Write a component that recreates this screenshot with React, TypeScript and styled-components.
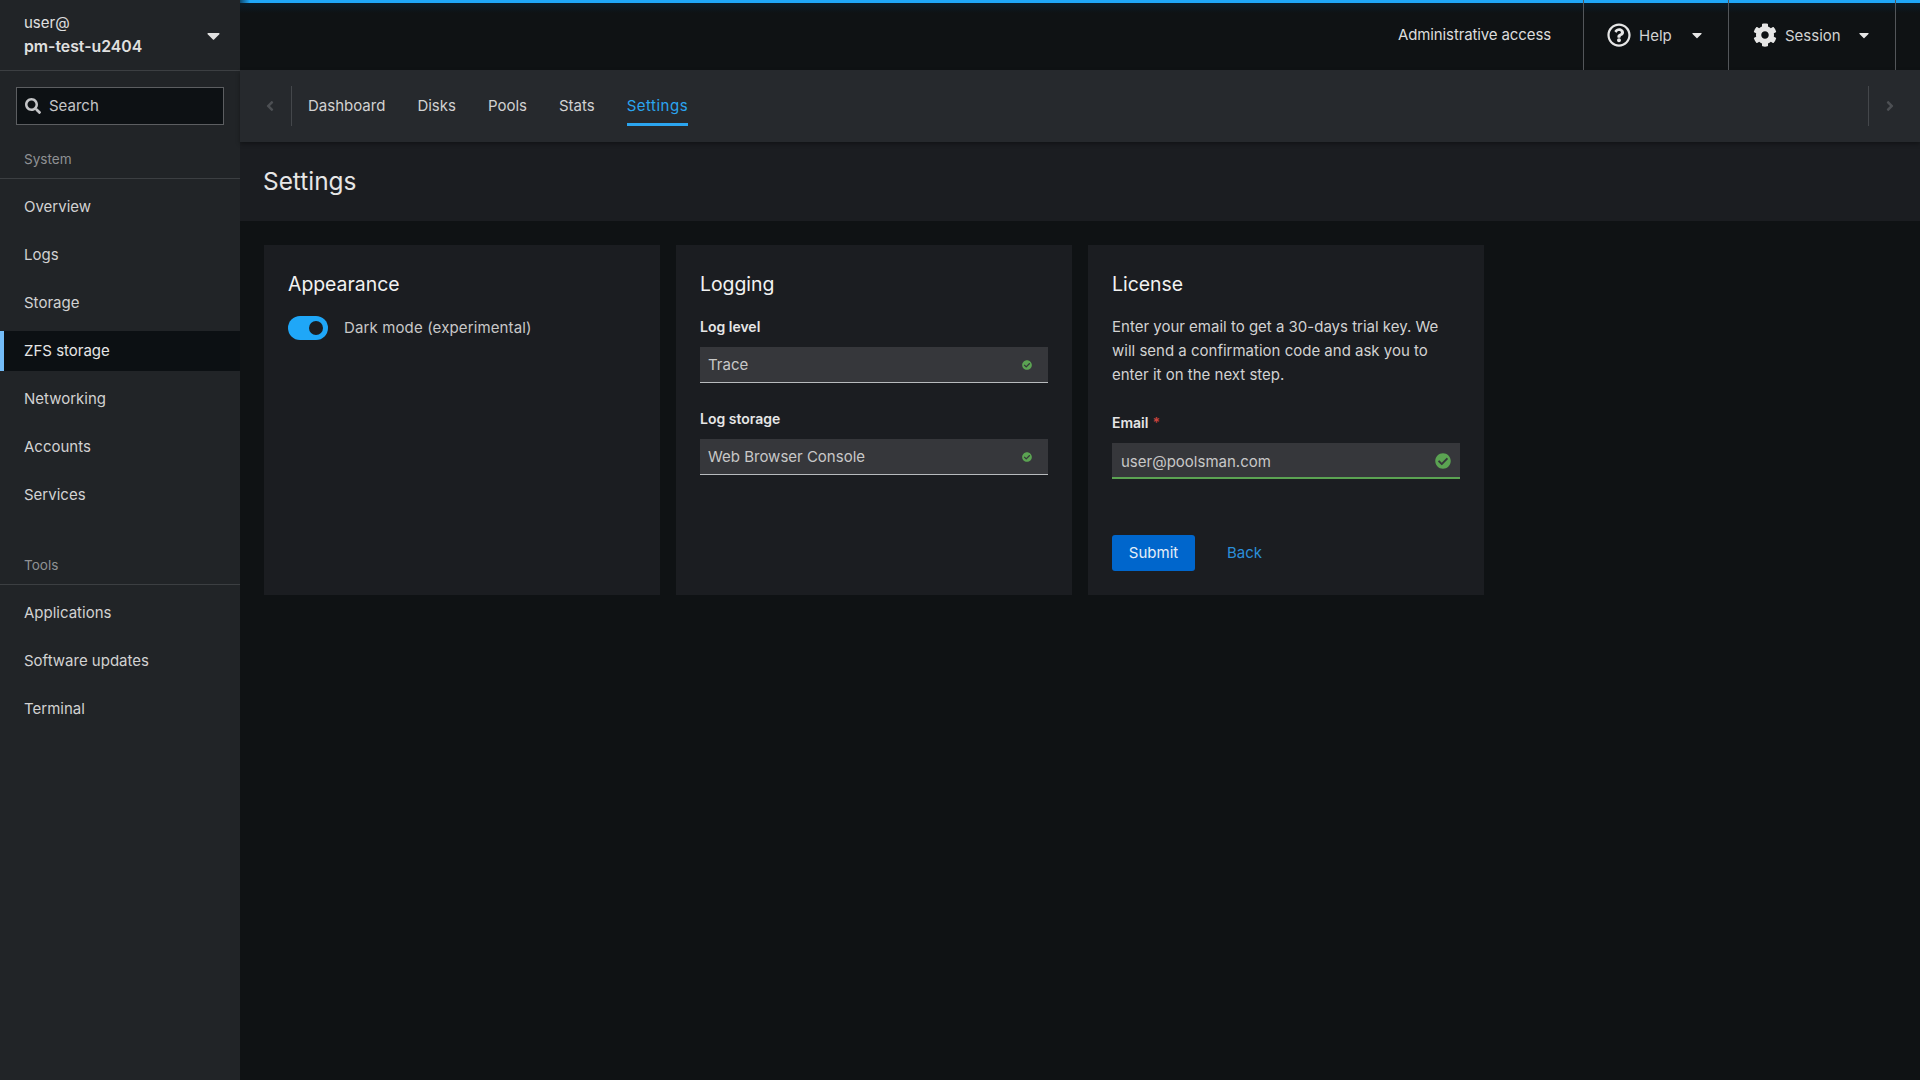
import * as React from "react";
import styled, { createGlobalStyle } from "styled-components";
import {
  FaAngleLeft,
  FaAngleRight,
  FaCaretDown,
  FaCheckCircle,
  FaCog,
  FaRegQuestionCircle,
  FaSearch,
} from "react-icons/fa";

const GlobalStyle = createGlobalStyle`
  html, body, #root {
    margin: 0;
    height: 100%;
  }
  body {
    background: #0f1214;
    color: #d2d2d2;
    font-family: Inter, "Noto Sans", sans-serif;
    font-size: 15px;
  }
  * {
    box-sizing: border-box;
  }
`;

const Page = styled.div`
  display: flex;
  width: 100%;
  height: 100vh;
  overflow: hidden;
`;

const Sidebar = styled.aside`
  width: 240px;
  flex: none;
  background: #212427;
`;

const HostSwitcher = styled.div`
  height: 71px;
  padding: 11px 24px 0;
  display: flex;
  justify-content: space-between;
  border-bottom: 1px solid #3c3f42;
  color: #e0e0e0;
`;

const HostText = styled.div`
  display: flex;
  flex-direction: column;
  line-height: 24px;
`;

const HostName = styled.span`
  font-size: 15.8px;
  font-weight: 600;
`;

const HostCaret = styled.span`
  display: flex;
  align-items: center;
  margin: 0 -8px 11px 0;
  font-size: 21px;
  color: #e0e0e0;
`;

const SearchBox = styled.div`
  display: flex;
  align-items: center;
  gap: 8px;
  height: 38px;
  margin: 16px 16px 0;
  padding: 0 0 2px 8px;
  background: #0d1114;
  border: 1px solid #5c5e61;
  color: #c4c5c7;
  svg {
    font-size: 16px;
    margin-top: 1px;
    color: #c4c5c7;
  }
`;

const SectionTitle = styled.div`
  padding: 24px 24px 9px;
  border-bottom: 1px solid #3c3f42;
  font-size: 13.6px;
  line-height: 20px;
  color: #8f9194;
`;

const NavList = styled.nav`
  display: flex;
  flex-direction: column;
  gap: 8px;
  padding: 8px 0 16px;
`;

const NavItem = styled.div<{ $active?: boolean }>`
  height: 40px;
  display: flex;
  align-items: center;
  padding-bottom: 2px;
  padding-left: ${(p) => (p.$active ? "20px" : "24px")};
  border-left: ${(p) => (p.$active ? "4px solid #73bcf7" : "none")};
  background: ${(p) => (p.$active ? "#0c1013" : "transparent")};
  color: ${(p) => (p.$active ? "#e6e6e6" : "#d2d2d2")};
`;

const Main = styled.main`
  position: relative;
  flex: 1;
  display: flex;
  flex-direction: column;
  min-width: 0;
`;

const TopBar = styled.header`
  position: relative;
  height: 70px;
  flex: none;
  display: flex;
  justify-content: flex-end;
  padding-right: 24px;
  background: linear-gradient(#0a1c29 3px, #0f1214 13px);

  &::before {
    content: "";
    position: absolute;
    top: 0;
    left: 0;
    right: 0;
    height: 3px;
    background: linear-gradient(90deg, #0c4a70, #1fa7f8 10px);
  }
`;

const AccessLabel = styled.div`
  position: relative;
  display: flex;
  align-items: center;
  padding: 0 32px 2px 0;
  letter-spacing: -0.12px;
  color: #dcdcdc;
`;

const TopButton = styled.div<{ $width: number; $inset: number; $last?: boolean }>`
  position: relative;
  width: ${(p) => p.$width}px;
  display: flex;
  align-items: center;
  padding-left: ${(p) => p.$inset}px;
  border-left: 1px solid #53565a;
  border-right: ${(p) => (p.$last ? "1px solid #53565a" : "none")};
  color: #d2d2d2;
`;

const TopIcon = styled.span<{ $size: number }>`
  display: flex;
  font-size: ${(p) => p.$size}px;
  margin-right: 8px;
  color: #e6e6e6;
`;

const SmallCaret = styled.span`
  display: flex;
  margin-left: auto;
  margin-right: 23px;
  font-size: 16px;
  color: #e6e6e6;
`;

const TabBar = styled.div`
  position: relative;
  z-index: 1;
  height: 72px;
  flex: none;
  display: flex;
  align-items: center;
  background: #26292d;
  box-shadow: 0 2px 4px rgba(0, 0, 0, 0.35);
`;

const ScrollButton = styled.div<{ $side: "left" | "right" }>`
  width: 52px;
  height: 40px;
  flex: none;
  display: flex;
  align-items: center;
  justify-content: center;
  color: #4c4f53;
  font-size: 16px;
  ${(p) =>
    p.$side === "left"
      ? "border-right: 1px solid #44474b; padding-left: 8px;"
      : "border-left: 1px solid #44474b; padding-right: 10px;"}
`;

const Tabs = styled.div`
  flex: 1;
  display: flex;
  gap: 32px;
  padding-left: 16px;
`;

const Tab = styled.div<{ $active?: boolean }>`
  height: 40px;
  display: flex;
  align-items: center;
  padding-bottom: 2px;
  color: ${(p) => (p.$active ? "#2ba5f0" : "#d2d2d2")};
  ${(p) => (p.$active ? "box-shadow: inset 0 -3px 0 #2ba5f0; letter-spacing: 0.5px;" : "")}
`;

const TitleBand = styled.div`
  height: 79px;
  flex: none;
  display: flex;
  align-items: center;
  padding: 0 23px 1px;
  background: #1b1d21;
`;

const PageTitle = styled.h1`
  margin: 0;
  font-size: 24.4px;
  font-weight: 400;
  color: #e6e6e6;
`;

const CardGrid = styled.section`
  display: grid;
  grid-template-columns: repeat(3, 396px);
  gap: 16px;
  padding: 24px;
`;

const Card = styled.div`
  height: 350px;
  padding: 24px;
  background: #1b1d21;
`;

const CardTitle = styled.h2`
  margin: 0;
  padding-top: 2px;
  font-size: 19.4px;
  line-height: 27px;
  font-weight: 400;
  color: #f2f2f2;
`;

const SwitchRow = styled.div`
  display: flex;
  align-items: center;
  gap: 16px;
  margin-top: 18px;
`;

const SwitchLabel = styled.span`
  margin-top: -2px;
  letter-spacing: 0.13px;
  color: #c8c8c8;
`;

const SwitchTrack = styled.span`
  width: 40px;
  height: 24px;
  display: flex;
  align-items: center;
  justify-content: flex-end;
  padding-right: 5px;
  border-radius: 12px;
  background: #1fa7f8;
`;

const SwitchKnob = styled.span`
  width: 14px;
  height: 14px;
  border-radius: 50%;
  background: #1b1d21;
`;

const FieldLabel = styled.div<{ $top: number }>`
  margin-top: ${(p) => p.$top}px;
  margin-bottom: 10px;
  font-size: 14px;
  line-height: 20px;
  font-weight: 600;
  color: #e6e6e6;
`;

const Required = styled.span`
  margin-left: 4px;
  color: #c9433d;
`;

const Field = styled.div<{ $valid?: boolean }>`
  height: 36px;
  display: flex;
  align-items: center;
  justify-content: space-between;
  background: #36373b;
  border-bottom: ${(p) => (p.$valid ? "2px solid #5ba352" : "1px solid #b8bbbe")};
  padding: ${(p) => (p.$valid ? "2px 9px 0 9px" : "0 16px 0 8px")};
  color: #c8c8c8;
`;

const Check = styled.span<{ $size: number }>`
  display: flex;
  font-size: ${(p) => p.$size}px;
  color: #5ba352;
`;

const Paragraph = styled.p`
  margin: 17px 0 0;
  line-height: 24px;
  color: #d2d2d2;
`;

const Actions = styled.div`
  display: flex;
  align-items: center;
  gap: 32px;
  margin-top: 56px;
`;

const SubmitButton = styled.button`
  width: 83px;
  height: 36px;
  padding: 0 0 2px;
  border: none;
  border-radius: 3px;
  background: #0066cc;
  color: #e6eef7;
  font: inherit;
`;

const BackLink = styled.a`
  padding-bottom: 2px;
  color: #2b8fd9;
`;

const systemItems = ["Overview", "Logs", "Storage", "ZFS storage", "Networking", "Accounts", "Services"];
const toolItems = ["Applications", "Software updates", "Terminal"];
const tabs = ["Dashboard", "Disks", "Pools", "Stats", "Settings"];

export default function App() {
  return (
    <Page>
      <GlobalStyle />
      <Sidebar>
        <HostSwitcher>
          <HostText>
            <span>user@</span>
            <HostName>pm-test-u2404</HostName>
          </HostText>
          <HostCaret>
            <FaCaretDown />
          </HostCaret>
        </HostSwitcher>
        <SearchBox>
          <FaSearch />
          <span>Search</span>
        </SearchBox>
        <SectionTitle>System</SectionTitle>
        <NavList>
          {systemItems.map((item) => (
            <NavItem key={item} $active={item === "ZFS storage"}>
              {item}
            </NavItem>
          ))}
        </NavList>
        <SectionTitle>Tools</SectionTitle>
        <NavList>
          {toolItems.map((item) => (
            <NavItem key={item}>{item}</NavItem>
          ))}
        </NavList>
      </Sidebar>
      <Main>
        <TopBar>
          <AccessLabel>Administrative access</AccessLabel>
          <TopButton $width={145} $inset={23}>
            <TopIcon $size={24}>
              <FaRegQuestionCircle />
            </TopIcon>
            Help
            <SmallCaret>
              <FaCaretDown />
            </SmallCaret>
          </TopButton>
          <TopButton $width={168} $inset={24} $last>
            <TopIcon $size={24}>
              <FaCog />
            </TopIcon>
            Session
            <SmallCaret>
              <FaCaretDown />
            </SmallCaret>
          </TopButton>
        </TopBar>
        <TabBar>
          <ScrollButton $side="left">
            <FaAngleLeft />
          </ScrollButton>
          <Tabs>
            {tabs.map((tab) => (
              <Tab key={tab} $active={tab === "Settings"}>
                {tab}
              </Tab>
            ))}
          </Tabs>
          <ScrollButton $side="right">
            <FaAngleRight />
          </ScrollButton>
        </TabBar>
        <TitleBand>
          <PageTitle>Settings</PageTitle>
        </TitleBand>
        <CardGrid>
          <Card>
            <CardTitle>Appearance</CardTitle>
            <SwitchRow>
              <SwitchTrack>
                <SwitchKnob />
              </SwitchTrack>
              <SwitchLabel>Dark mode (experimental)</SwitchLabel>
            </SwitchRow>
          </Card>
          <Card>
            <CardTitle>Logging</CardTitle>
            <FieldLabel $top={19}>Log level</FieldLabel>
            <Field>
              Trace
              <Check $size={10}>
                <FaCheckCircle />
              </Check>
            </Field>
            <FieldLabel $top={26}>Log storage</FieldLabel>
            <Field>
              Web Browser Console
              <Check $size={10}>
                <FaCheckCircle />
              </Check>
            </Field>
          </Card>
          <Card>
            <CardTitle>License</CardTitle>
            <Paragraph>
              Enter your email to get a 30-days trial key. We will send a confirmation code and ask
              you to enter it on the next step.
            </Paragraph>
            <FieldLabel $top={26}>
              Email<Required>*</Required>
            </FieldLabel>
            <Field $valid>
              user@poolsman.com
              <Check $size={16}>
                <FaCheckCircle />
              </Check>
            </Field>
            <Actions>
              <SubmitButton>Submit</SubmitButton>
              <BackLink>Back</BackLink>
            </Actions>
          </Card>
        </CardGrid>
      </Main>
    </Page>
  );
}
